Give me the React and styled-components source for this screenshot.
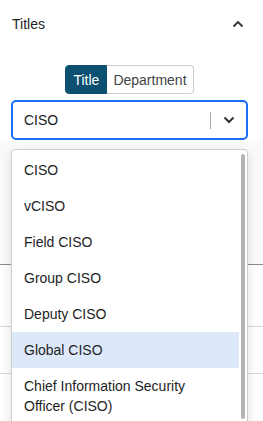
import React from "react";
import styled, { createGlobalStyle } from "styled-components";

const Global = createGlobalStyle`
  html, body { margin: 0; padding: 0; background: #fff; }
  body { font-family: "Liberation Sans", Arial, sans-serif; color: #222; overflow: hidden; }
  * { box-sizing: border-box; }
`;

const Page = styled.div`
  position: relative;
  width: 263px;
  height: 421px;
  overflow: hidden;
`;

const Panel = styled.div`
  padding: 0 15px 0 11px;
  display: flex;
  flex-direction: column;
`;

const Header = styled.div`
  height: 48px;
  display: flex;
  align-items: center;
  justify-content: space-between;
  padding: 0 4px 0 1px;
  font-size: 14px;
  color: #222;
`;

const Segments = styled.div`
  margin-top: 17px;
  align-self: center;
  display: flex;
  height: 29px;
`;

const Seg = styled.button`
  font-family: inherit;
  font-size: 14px;
  height: 29px;
  padding: 0 ${(p) => (p.$active ? "7px" : "6px")};
  border: 1px solid ${(p) => (p.$active ? "#0b4f71" : "#cfcfcf")};
  background: ${(p) => (p.$active ? "#0b4f71" : "#fff")};
  color: ${(p) => (p.$active ? "#fff" : "#444")};
  border-radius: ${(p) => (p.$first ? "4px 0 0 4px" : "0 4px 4px 0")};
  ${(p) => (!p.$first ? "border-left: none;" : "")}
  cursor: pointer;
`;

const Select = styled.div`
  margin-top: 6px;
  height: 40px;
  border: 2px solid #1a6ef5;
  border-radius: 5px;
  display: flex;
  align-items: center;
  padding-left: 11px;
  font-size: 14px;
  color: #1a1a1a;
`;

const SelectValue = styled.div`
  flex: 1;
`;

const Divider = styled.div`
  width: 1px;
  height: 17px;
  background: #aaa;
`;

const Caret = styled.div`
  width: 35px;
  display: flex;
  justify-content: center;
  align-items: center;
`;

const Table = styled.div`
  position: absolute;
  left: 0;
  right: 0;
  top: 141px;
`;

const Row = styled.div`
  height: ${(p) => p.$h}px;
  border-bottom: 1px solid ${(p) => p.$line};
  background: ${(p) => p.$bg || "#fff"};
`;

const Menu = styled.div`
  position: absolute;
  left: 11px;
  top: 149px;
  width: 237px;
  height: 290px;
  border: 1px solid #cfcfcf;
  border-radius: 4px;
  background: #fff;
  box-shadow: 0 4px 12px rgba(0, 0, 0, 0.12);
  padding: 2px 8px 0 0;
`;

const Item = styled.div`
  padding: 8px 12px;
  line-height: 20px;
  font-size: 14px;
  color: #1e1e1e;
  background: ${(p) => (p.$hl ? "#dde9fb" : "transparent")};
`;

const Thumb = styled.div`
  position: absolute;
  right: 2px;
  top: 4px;
  width: 4px;
  height: 265px;
  border-radius: 2px;
  background: #b4b4b4;
`;

const items = [
  "CISO",
  "vCISO",
  "Field CISO",
  "Group CISO",
  "Deputy CISO",
  "Global CISO",
  "Chief Information Security Officer (CISO)",
];

export default function App() {
  return (
    <Page>
      <Global />
      <Table>
        <Row $h={124} $line="#8a8a8a" $bg="#fafafa" />
        <Row $h={62} $line="#d6d6d6" />
        <Row $h={47} $line="#d6d6d6" />
      </Table>
      <Panel>
        <Header>
          <span>Titles</span>
          <svg width="12" height="8" viewBox="0 0 12 8">
            <path d="M1.5 6.5 L6 2 L10.5 6.5" fill="none" stroke="#333" strokeWidth="1.8" />
          </svg>
        </Header>
        <Segments>
          <Seg $active $first>Title</Seg>
          <Seg>Department</Seg>
        </Segments>
        <Select>
          <SelectValue>CISO</SelectValue>
          <Divider />
          <Caret>
            <svg width="12" height="8" viewBox="0 0 12 8">
              <path d="M1.5 1.5 L6 6 L10.5 1.5" fill="none" stroke="#333" strokeWidth="2" />
            </svg>
          </Caret>
        </Select>
      </Panel>
      <Menu>
        {items.map((t) => (
          <Item key={t} $hl={t === "Global CISO"}>
            {t}
          </Item>
        ))}
        <Thumb />
      </Menu>
    </Page>
  );
}
